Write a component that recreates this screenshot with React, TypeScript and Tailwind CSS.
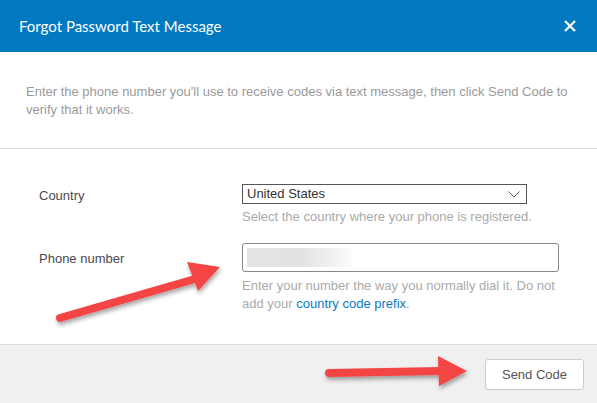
import React from "react";

export default function App() {
  return (
    <div className="relative w-[597px] h-[403px] overflow-hidden bg-white" style={{ fontFamily: '"Liberation Sans", Arial, sans-serif' }}>
      <div className="h-[52px] bg-[#0079c1] flex items-center justify-between pl-[19px] pr-[19px]">
        <span className="text-white text-[15px] font-normal font-['Lato',sans-serif]">Forgot Password Text Message</span>
        <svg width="12" height="12" viewBox="0 0 12 12" className="mr-[2px]">
          <path d="M1 1 L11 11 M11 1 L1 11" stroke="white" strokeWidth="2.2" />
        </svg>
      </div>
      <div className="h-[97px] border-b border-[#dcdcdc] px-[26px] pt-[31px]">
        <p className="text-[13px] leading-[18px] text-[#9a9a9a] w-[545px]">
          Enter the phone number you'll use to receive codes via text message, then click Send Code to verify that it works.
        </p>
      </div>
      <div className="h-[195px] pt-[35px] pl-[39px]">
        <div className="flex">
          <div className="w-[203px] text-[13px] text-[#4a4a4a] pt-[2px]">Country</div>
          <div>
            <div className="w-[285px] h-[20px] border border-[#555] flex items-center justify-between pl-[4px] pr-[6px] text-[13px] text-[#333]">
              <span>United States</span>
              <svg width="12" height="7" viewBox="0 0 12 7">
                <path d="M0.5 0.5 L6 6 L11.5 0.5" stroke="#555" strokeWidth="1" fill="none" />
              </svg>
            </div>
            <div className="text-[13px] text-[#aaa] mt-[4px] leading-[18px]">Select the country where your phone is registered.</div>
          </div>
        </div>
        <div className="flex mt-[17px]">
          <div className="w-[203px] text-[13px] text-[#4a4a4a] pt-[6px]">Phone number</div>
          <div>
            <div className="w-[317px] h-[29px] border border-[#888] rounded-[3px] flex items-center pl-[4px]">
              <div className="w-[105px] h-[19px] bg-gradient-to-r from-[#e4e4e4] via-[#e2e2e2] to-[#fafafa]" />
            </div>
            <div className="text-[13px] text-[#aaa] mt-[5px] leading-[18px] w-[330px]">
              <div>Enter your number the way you normally dial it. Do not</div>
              <div>add your <span className="text-[#0a7abf]">country code prefix</span>.</div>
            </div>
          </div>
        </div>
      </div>
      <div className="border-t border-[#dcdcdc] bg-[#f0f0f0] h-[60px] flex items-start justify-end pr-[13px] pt-[14px]">
        <button className="w-[99px] h-[31px] bg-white border border-[#ccc] rounded-[3px] text-[13px] text-[#555]">Send Code</button>
      </div>
      <svg className="absolute left-0 top-0 pointer-events-none" width="597" height="403" viewBox="0 0 597 403">
        <defs>
          <filter id="sh" x="-20%" y="-20%" width="140%" height="140%">
            <feDropShadow dx="1" dy="3" stdDeviation="2" floodColor="#000" floodOpacity="0.35" />
          </filter>
        </defs>
        <g filter="url(#sh)" fill="#f44444">
          <line x1="60" y1="318" x2="195" y2="279" stroke="#f44444" strokeWidth="8" strokeLinecap="round" />
          <polygon points="220,267 187,262 198,291" />
          <line x1="329" y1="373" x2="442" y2="371" stroke="#f44444" strokeWidth="8" strokeLinecap="round" />
          <polygon points="467,371 438,356 439,386" />
        </g>
      </svg>
    </div>
  );
}
